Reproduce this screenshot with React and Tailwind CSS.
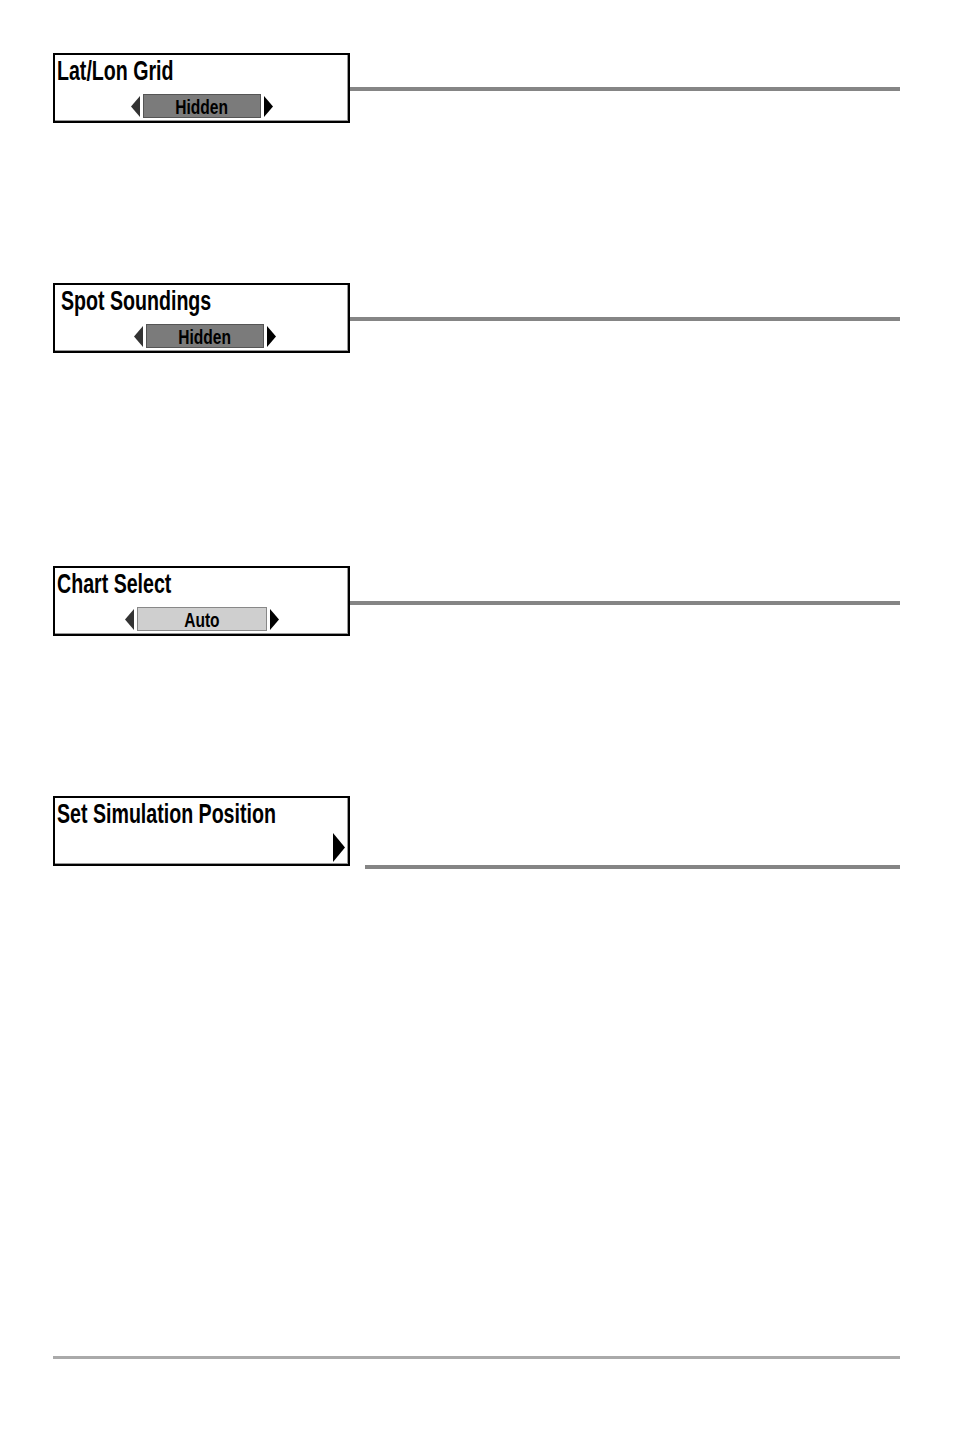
import React from "react";

const font = { fontFamily: '"Liberation Sans", Arial, sans-serif' };

function LeftArrow({ color = "#333" }) {
    return (
        <svg width="9" height="21" viewBox="0 0 9 21" className="shrink-0">
            <polygon points="9,0 0,10.5 9,21" fill={color} />
        </svg>
    );
}

function RightArrow({ color = "#000", w = 9, h = 21 }) {
    return (
        <svg width={w} height={h} viewBox={`0 0 ${w} ${h}`} className="shrink-0">
            <polygon points={`0,0 ${w},${h / 2} 0,${h}`} fill={color} />
        </svg>
    );
}

function MenuBox({ title, titleIndent = "pl-[2px]", children }) {
    return (
        <div className="w-[297px] h-[70px] shrink-0 border-2 border-black bg-white flex flex-col shadow-[inset_-1px_-1px_0_#999]">
            <div className={`pt-[2px] ${titleIndent} h-[29px]`}>
                <span className="inline-block origin-left scale-x-[0.7] whitespace-nowrap text-[28px] leading-none font-bold text-black" style={font}>
                    {title}
                </span>
            </div>
            {children}
        </div>
    );
}

function ValueRow({ value, dark, boxWidth }) {
    return (
        <div className="mt-[10px] flex items-center justify-center gap-[3px]">
            <LeftArrow />
            <div
                className={`h-[24px] flex items-center justify-center border ${dark ? "bg-[#7b7b7b] border-[#555]" : "bg-[#cfcfcf] border-[#888]"} ${boxWidth}`}
            >
                <span className="inline-block scale-x-[0.74] text-[21px] leading-none font-bold text-black" style={font}>
                    {value}
                </span>
            </div>
            <RightArrow />
        </div>
    );
}

export default function App() {
    return (
        <div className="w-[954px] h-[1431px] bg-white pl-[53px] pr-[54px] pt-[53px]">
            <div className="flex items-start">
                <MenuBox title="Lat/Lon Grid">
                    <ValueRow value="Hidden" dark boxWidth="w-[118px]" />
                </MenuBox>
                <div className="flex-1 h-[4px] mt-[34px] bg-[#858585]" />
            </div>

            <div className="flex items-start mt-[160px]">
                <MenuBox title="Spot Soundings" titleIndent="pl-[6px]">
                    <div className="pl-[6px]">
                        <ValueRow value="Hidden" dark boxWidth="w-[118px]" />
                    </div>
                </MenuBox>
                <div className="flex-1 h-[4px] mt-[34px] bg-[#858585]" />
            </div>

            <div className="flex items-start mt-[213px]">
                <MenuBox title="Chart Select">
                    <ValueRow value="Auto" boxWidth="w-[130px]" />
                </MenuBox>
                <div className="flex-1 h-[4px] mt-[35px] bg-[#858585]" />
            </div>

            <div className="flex items-start mt-[160px]">
                <MenuBox title="Set Simulation Position">
                    <div className="flex justify-end pr-[3px] mt-[6px]">
                        <RightArrow w={12} h={29} />
                    </div>
                </MenuBox>
                <div className="flex-1 h-[4px] mt-[69px] ml-[15px] bg-[#858585]" />
            </div>

            <div className="mt-[487px] h-[3px] bg-[#aaaaaa]" />
        </div>
    );
}
